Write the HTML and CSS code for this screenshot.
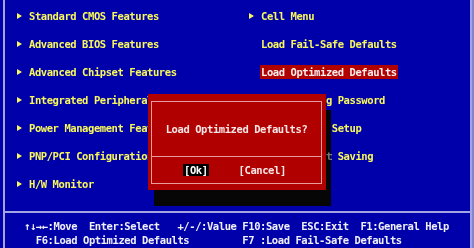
FILE: index.html
```html
<!doctype html>
<html lang="en">
    <head>
        <meta charset="UTF-8" />
        <title>CMOS Setup Utility</title>
        <link rel="stylesheet" href="styles.css">
    </head>
    <body>
        <div class="screen">
            <div class="menu">
                <ul class="col col-left">
                    <li class="sub">Standard CMOS Features</li>
                    <li class="sub">Advanced BIOS Features</li>
                    <li class="sub">Advanced Chipset Features</li>
                    <li class="sub">Integrated Peripherals</li>
                    <li class="sub">Power Management Features</li>
                    <li class="sub">PNP/PCI Configurations</li>
                    <li class="sub">H/W Monitor</li>
                </ul>
                <ul class="col col-right">
                    <li class="sub">Cell Menu</li>
                    <li>Load Fail-Safe Defaults</li>
                    <li><span class="active">Load Optimized Defaults</span></li>
                    <li>BIOS Setting Password</li>
                    <li>Save &amp; Exit Setup</li>
                    <li>Exit Without Saving</li>
                </ul>
                <div class="dialog-shadow"></div>
                <div class="dialog">
                    <div class="dialog-frame">
                        <p class="dialog-title">Load Optimized Defaults?</p>
                        <div class="dialog-buttons">
                            <span class="dlg-btn selected">[Ok]</span>
                            <span class="dlg-btn">[Cancel]</span>
                        </div>
                    </div>
                </div>
            </div>
            <div class="help">
                <div class="help-line">↑↓→←:Move  Enter:Select   +/-/:Value F10:Save  ESC:Exit  F1:General Help</div>
                <div class="help-line">  F6:Load Optimized Defaults         F7 :Load Fail-Safe Defaults</div>
            </div>
        </div>
    </body>
</html>
```

FILE: styles.css
```css
body {
    margin: 0;
    width: 474px;
    height: 248px;
    overflow: hidden;
    background-color: #0000aa;
    font-family: "DejaVu Sans Mono", "Liberation Mono", monospace;
    font-weight: bold;
    font-size: 10.5px;
    letter-spacing: -0.42px;
}
.screen {
    margin-left: 3px;
    width: 465px;
    height: 248px;
    border-left: 2px solid #a4a4e4;
    border-right: 2px solid #a4a4e4;
    box-shadow: 2px 0 0 #8484cc;
    display: flex;
    flex-direction: column;
}
.menu {
    position: relative;
    height: 211px;
    display: grid;
    grid-template-columns: 244px 1fr;
}
.col {
    list-style: none;
    margin: 0;
    padding: 1.5px 0 0;
}
.col-left {
    padding-left: 12px;
}
.col li {
    height: 28px;
    line-height: 28px;
    padding-left: 12px;
    color: #f8f85c;
    white-space: nowrap;
}
.col li.sub::before {
    content: "";
    display: inline-block;
    vertical-align: middle;
    margin: -1px 7px 0 -12px;
    border-left: 5px solid #f8f85c;
    border-top: 3px solid transparent;
    border-bottom: 3px solid transparent;
}
.active {
    display: inline-block;
    line-height: 14px;
    margin-left: -1px;
    padding: 0 1px;
    background-color: #b00000;
    color: #f8eeee;
}
.dialog-shadow {
    position: absolute;
    left: 149px;
    top: 110px;
    width: 178px;
    height: 96px;
    backdrop-filter: grayscale(1) brightness(0.5);
}
.dialog {
    position: absolute;
    left: 143px;
    top: 94px;
    width: 178px;
    height: 96px;
    box-sizing: border-box;
    padding: 7px 4px 6px 3px;
    background-color: #b00000;
}
.dialog-frame {
    height: 100%;
    box-sizing: border-box;
    border: 1px solid #e89c9c;
    display: flex;
    flex-direction: column;
}
.dialog-title {
    flex: 1;
    margin: 0;
    display: flex;
    align-items: center;
    justify-content: center;
    border-bottom: 1px solid #e89c9c;
    color: #f6e6e6;
}
.dialog-buttons {
    height: 26px;
    display: flex;
    align-items: center;
    gap: 29px;
    padding-left: 31px;
    color: #f6e6e6;
}
.dlg-btn {
    line-height: 12px;
    padding: 0 1px;
}
.dlg-btn.selected {
    background-color: #000;
    color: #fff;
}
.help {
    flex: 1;
    border-top: 2px solid #a4a4e4;
    padding: 7px 0 0 19px;
    color: #f0f0f8;
}
.help-line {
    height: 13.5px;
    line-height: 13.5px;
    white-space: pre;
}
```
